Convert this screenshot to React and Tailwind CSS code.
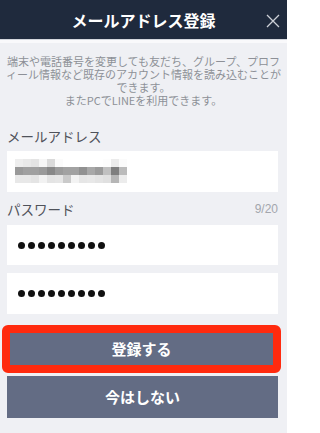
import React from "react";

const topRow = ["bg-[#eeeeee]","bg-[#e9e9e9]","bg-[#e4e4e4]","bg-[#f6f6f6]","bg-[#dadada]","bg-[#fbfbfb]","bg-[#ffffff]","bg-[#ffffff]","bg-[#ffffff]","bg-[#ffffff]","bg-[#ffffff]","bg-[#fdfdfd]","bg-[#ebebeb]","bg-[#fbfbfb]"];
const midRow = ["bg-[#999999]","bg-[#a0a0a0]","bg-[#a0a0a0]","bg-[#9a9a9a]","bg-[#888888]","bg-[#9b9b9b]","bg-[#a2a2a2]","bg-[#a2a2a2]","bg-[#919191]","bg-[#a8a8a8]","bg-[#9b9b9b]","bg-[#c0c0c0]","bg-[#7e7e7e]","bg-[#bbbbbb]"];
const botRow = ["bg-[#e8e8e8]","bg-[#e8e8e8]","bg-[#e4e4e4]","bg-[#f2f2f2]","bg-[#e4e4e4]","bg-[#e6e6e6]","bg-[#cacaca]","bg-[#f3f3f3]","bg-[#e6e6e6]","bg-[#e8e8e8]","bg-[#e4e4e4]","bg-[#e0e0e0]","bg-[#b6b6b6]","bg-[#ececec]"];

function Row({ cells }) {
  return (
    <div className="flex">
      {cells.map((c, i) => (
        <div key={i} className={"w-[8px] h-[8px] " + c} />
      ))}
    </div>
  );
}

function Dots() {
  return (
    <div className="flex gap-[3px]">
      {Array.from({ length: 9 }).map((_, i) => (
        <div key={i} className="w-[7px] h-[7px] rounded-full bg-[#111111]" />
      ))}
    </div>
  );
}

export default function App() {
  return (
    <div
      className="w-[287px] min-h-screen bg-[#eff0f4] overflow-hidden"
      style={{ fontFamily: '"Noto Sans CJK JP", "Noto Sans", sans-serif' }}
    >
      <div className="relative h-[39px] bg-[#1f2a3d] flex items-center justify-center">
        <span className="text-white text-[16px] font-bold leading-none">メールアドレス登録</span>
        <svg className="absolute right-[7px] top-[14px]" width="14" height="14" viewBox="0 0 14 14">
          <path d="M1 1 L13 13 M13 1 L1 13" stroke="#cdd0d7" strokeWidth="1.3" fill="none" />
        </svg>
      </div>
      <div className="h-[1px] bg-[#d3d6dd]" />
      <div className="h-[3px] bg-[#f9f9fb]" />

      <div className="pt-[12px] text-center text-[11px] leading-[13px] text-[#8d9097] whitespace-nowrap">
        <div>端末や電話番号を変更しても友だち、グループ、プロフ</div>
        <div>ィール情報など既存のアカウント情報を読み込むことが</div>
        <div>できます。</div>
        <div>またPCでLINEを利用できます。</div>
      </div>

      <div className="mt-[20px] pl-[7px] text-[13.5px] leading-[18px] text-[#4f525a]">メールアドレス</div>
      <div className="mt-[6px] ml-[7px] w-[271px] h-[41px] bg-white pl-[8px] pt-[8px]">
        <Row cells={topRow} />
        <Row cells={midRow} />
        <Row cells={botRow} />
      </div>

      <div className="mt-[8px] ml-[7px] w-[271px] flex items-center justify-between leading-[18px]">
        <span className="text-[13.5px] text-[#4f525a]">パスワード</span>
        <span className="text-[12px] text-[#a3a6ad]" style={{ fontFamily: '"Liberation Sans", sans-serif' }}>9/20</span>
      </div>
      <div className="mt-[7px] ml-[7px] w-[271px] h-[40px] bg-white pl-[11px] flex items-center">
        <Dots />
      </div>
      <div className="mt-[8px] ml-[7px] w-[271px] h-[41px] bg-white pl-[11px] flex items-center">
        <Dots />
      </div>

      <div className="mt-[11px] ml-[2px] w-[279px] h-[48px] border-[8px] border-[#ff2a0e] rounded-[6px] bg-[#636c84] flex items-center justify-center">
        <span className="text-white text-[15px] font-bold">登録する</span>
      </div>
      <div className="mt-[3px] ml-[7px] w-[271px] h-[42px] bg-[#636c84] flex items-center justify-center">
        <span className="text-white text-[15px] font-bold">今はしない</span>
      </div>
    </div>
  );
}
